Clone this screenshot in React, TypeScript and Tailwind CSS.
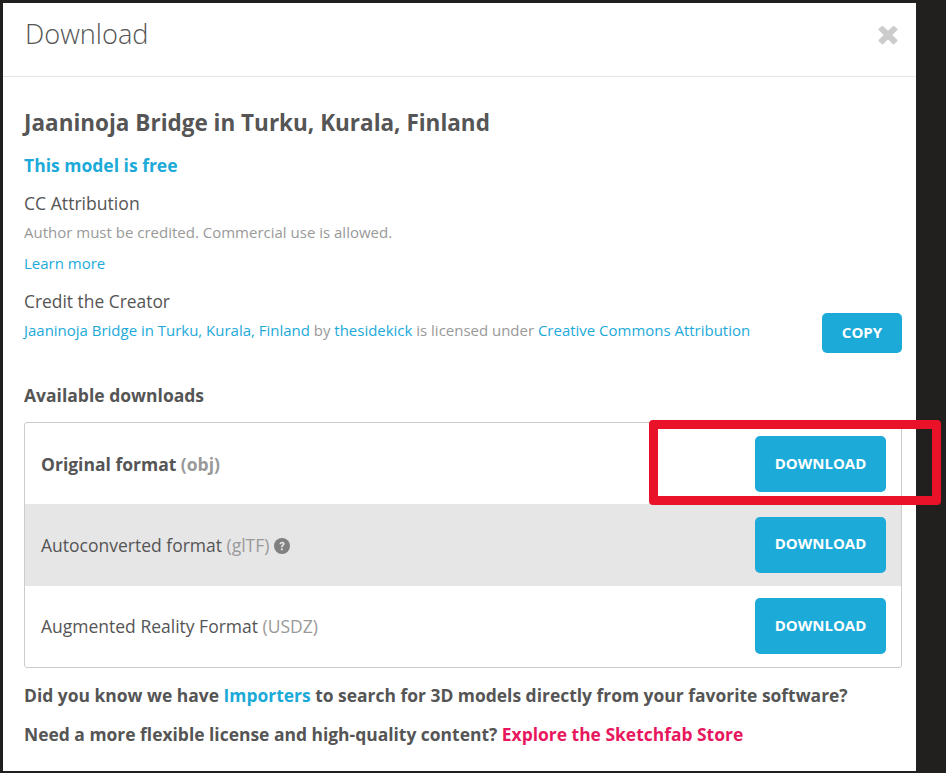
import React from "react";

const font = { fontFamily: '"Open Sans", sans-serif' };

function Btn({ children, w }: { children: React.ReactNode; w: string }) {
  return (
    <div className={`${w} flex items-center justify-center rounded-[5px] bg-[#1caad9] pb-[2px] text-[15px] font-bold text-white`}>
      {children}
    </div>
  );
}

function Row({ children, cls, textCls = "" }: { children: React.ReactNode; cls: string; textCls?: string }) {
  return (
    <div className={`flex items-center justify-between pl-[16px] pr-[15px] text-[17.5px] text-[#555] ${cls}`}>
      <div className={`flex items-center ${textCls}`}>{children}</div>
      <Btn w="w-[131px] h-[56px]">DOWNLOAD</Btn>
    </div>
  );
}

export default function App() {
  return (
    <div className="relative h-[773px] w-[946px] overflow-hidden bg-[#21201e] pl-[3px] pt-[3px]" style={font}>
      <div className="h-[768px] w-[913px] bg-white">
        <div className="flex h-[74px] justify-between border-b border-[#e6e6e6] pl-[22px] pr-[17px]">
          <div className="pt-[15px] text-[27.2px] font-light leading-[32px] text-[#555]">Download</div>
          <svg width="22" height="22" viewBox="0 0 20 20" className="mt-[21px] text-[#cccccc]">
            <path d="M5 2.5 L10 7.2 L15 2.5 L18 5 L13 10 L18 15 L15 17.8 L10 12.8 L5 17.8 L2 15 L7 10 L2 5 Z" fill="currentColor" stroke="currentColor" strokeWidth="1.5" strokeLinejoin="round" />
          </svg>
        </div>
        <div className="pl-[21px] pr-[14px]">
          <div className="pt-[29px] text-[22.5px] font-bold leading-[34px] text-[#555]">Jaaninoja Bridge in Turku, Kurala, Finland</div>
          <div className="pt-[13px] text-[17.5px] font-bold leading-[25px] text-[#1caad9]">This model is free</div>
          <div className="pt-[13px] text-[17.6px] leading-[25px] text-[#555]">CC Attribution</div>
          <div className="pt-[6px] text-[15px] leading-[20px] text-[#999]">Author must be credited. Commercial use is allowed.</div>
          <div className="pt-[11px] text-[15px] leading-[20px] text-[#1caad9]">Learn more</div>
          <div className="pt-[16px] text-[17.4px] leading-[25px] text-[#555]">Credit the Creator</div>
          <div className="flex items-start justify-between">
            <div className="pt-[6px] text-[14.97px] leading-[20px] text-[#999]">
              <span className="text-[#1caad9]">Jaaninoja Bridge in Turku, Kurala, Finland</span> by{" "}
              <span className="text-[#1caad9]">thesidekick</span> is licensed under{" "}
              <span className="text-[#1caad9]">Creative Commons Attribution</span>
            </div>
            <div className="-mt-[1px]">
              <Btn w="w-[80px] h-[40px]">COPY</Btn>
            </div>
          </div>
          <div className="pt-[30px] text-[17.5px] font-bold leading-[25px] text-[#555]">Available downloads</div>
          <div className="mt-[14px] w-[878px] rounded-[3px] border border-[#cccccc]">
            <Row cls="h-[81px] pt-[1px]">
              <span className="font-bold">Original format&nbsp;</span>
              <span className="font-bold text-[#999]">(obj)</span>
            </Row>
            <Row cls="h-[82px] pb-[1px] bg-[#e6e6e6]" textCls="pt-[2px]">
              <span>Autoconverted format&nbsp;</span>
              <span className="text-[#999]">(glTF)</span>
              <svg width="16" height="16" viewBox="0 0 24 24" className="ml-[5px]">
                <circle cx="12" cy="12" r="12" fill="#808080" />
                <path d="M8.2 9.2c.2-2.3 1.8-3.7 4-3.7s3.8 1.3 3.8 3.2c0 2.6-3 2.8-3 5.2h-2.6c0-3.3 2.9-3.6 2.9-5 0-.8-.5-1.2-1.2-1.2-.8 0-1.3.6-1.4 1.5z" fill="#e6e6e6" />
                <rect x="10.4" y="15.6" width="2.7" height="2.9" fill="#e6e6e6" />
              </svg>
            </Row>
            <Row cls="h-[81px] pb-[1px]">
              <span>Augmented Reality Format&nbsp;</span>
              <span className="text-[#999]">(USDZ)</span>
            </Row>
          </div>
          <div className="pt-[15px] text-[17.45px] font-bold leading-[25px] text-[#555]">
            Did you know we have <span className="text-[#1caad9]">Importers</span> to search for 3D models directly from your favorite software?
          </div>
          <div className="pt-[14px] text-[17.45px] font-bold leading-[25px] text-[#555]">
            Need a more flexible license and high-quality content? <span className="text-[#e8175d]">Explore the Sketchfab Store</span>
          </div>
        </div>
      </div>
      <div className="absolute left-[649px] top-[420px] h-[85px] w-[292px] rounded-[4px] border-[9px] border-[#ea1228]" />
    </div>
  );
}
